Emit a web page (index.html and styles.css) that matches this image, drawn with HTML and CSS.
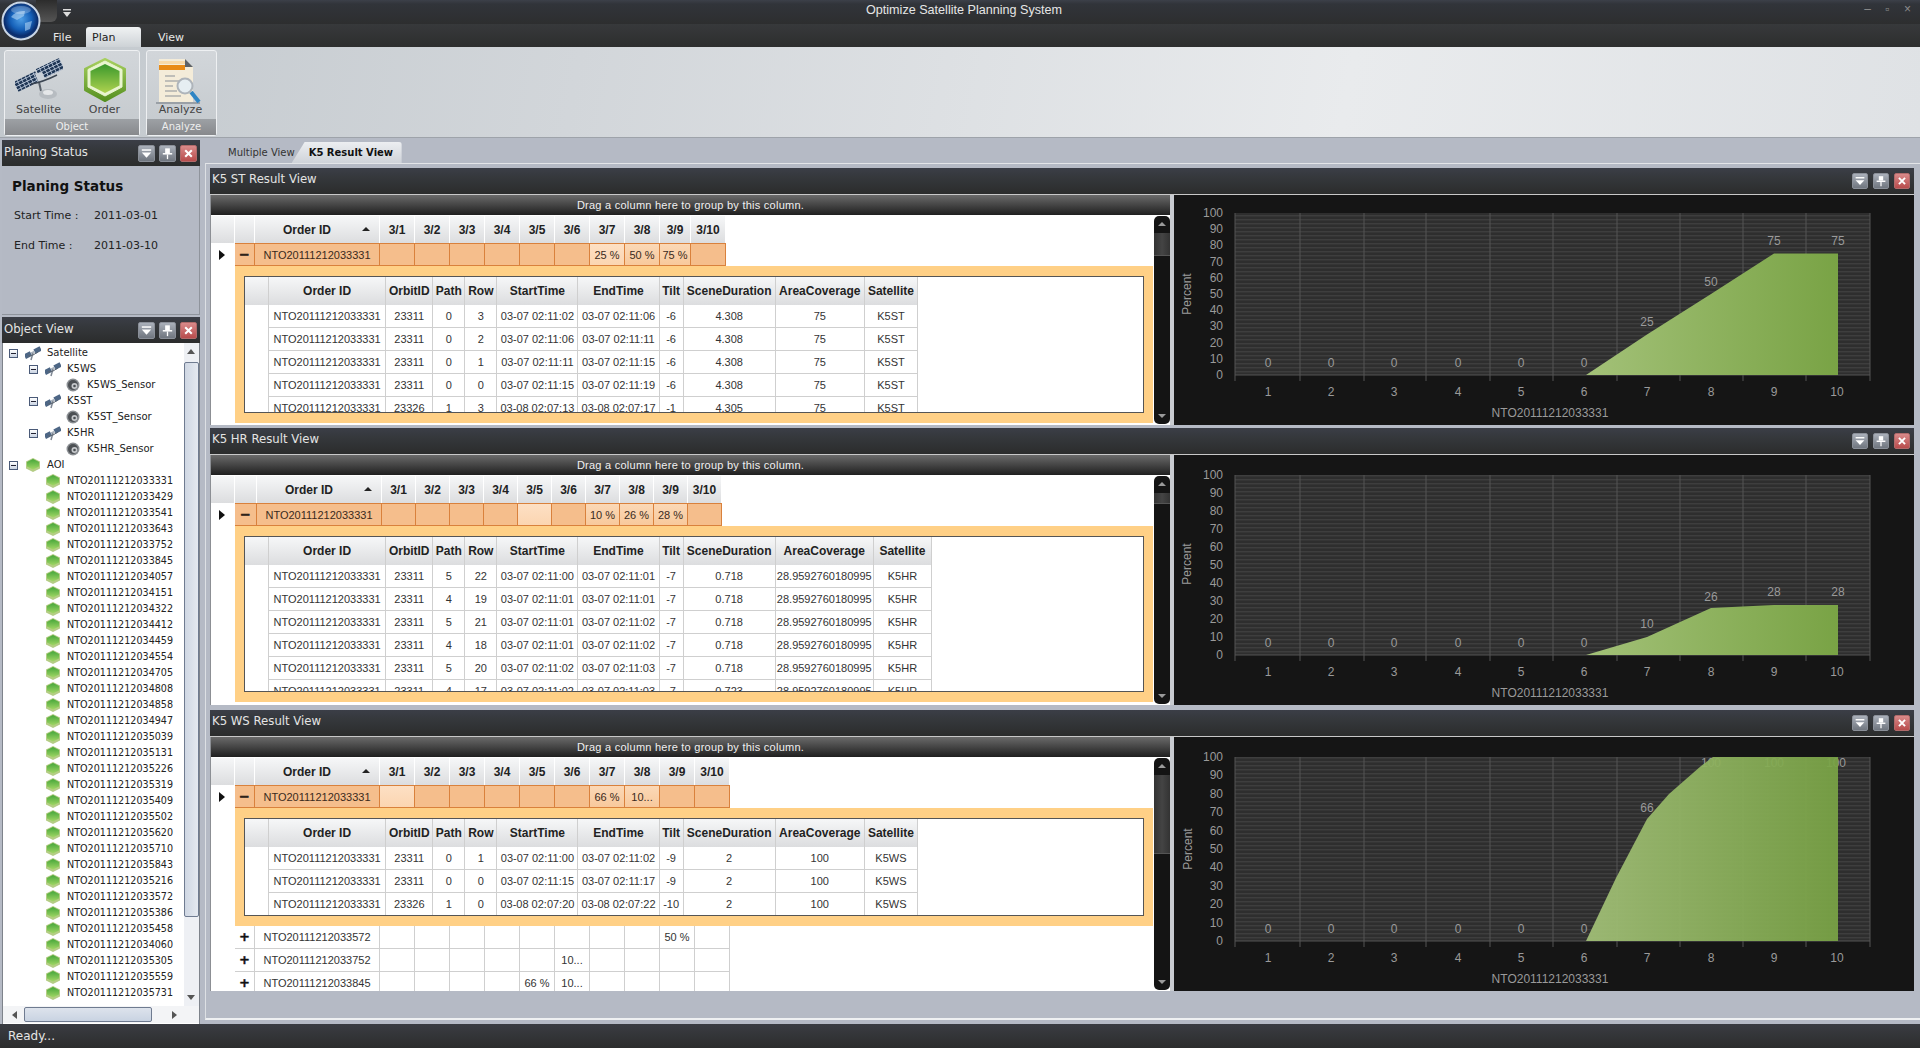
FILE: index.html
```html
<!DOCTYPE html>
<html lang="en">
<head>
<meta charset="utf-8">
<title>Optimize Satellite Planning System</title>
<link rel="stylesheet" href="styles.css">
</head>
<body>
<svg class="defs" width="0" height="0" aria-hidden="true">
  <defs>
    <radialGradient id="globeG" cx="50%" cy="45%" r="52%"><stop offset="0" stop-color="#4f9fe6"/><stop offset=".55" stop-color="#1560b8"/><stop offset=".88" stop-color="#0a2c6c"/><stop offset="1" stop-color="#1c3f78"/></radialGradient>
    <linearGradient id="hexOut" x1="0" y1="0" x2="0" y2="1"><stop offset="0" stop-color="#a8d060"/><stop offset="1" stop-color="#55901f"/></linearGradient>
    <linearGradient id="hexIn" x1="0" y1="0" x2="0" y2="1"><stop offset="0" stop-color="#3a982c"/><stop offset="1" stop-color="#aed24f"/></linearGradient>
    <linearGradient id="hexSm" x1="0" y1="0" x2="0" y2="1"><stop offset="0" stop-color="#45a63a"/><stop offset="1" stop-color="#a3d766"/></linearGradient>
    <linearGradient id="areaG" x1="0" y1="0" x2="1" y2="0"><stop offset="0" stop-color="#a3c178"/><stop offset="1" stop-color="#79a345"/></linearGradient>
    <pattern id="stripes" width="4" height="4" patternUnits="userSpaceOnUse"><rect width="4" height="4" fill="#2e2e2e"/><rect width="4" height="1.4" fill="#3e3e3e"/></pattern>
    <pattern id="cells" width="4.4" height="3.4" patternUnits="userSpaceOnUse"><rect width="4.4" height="3.4" fill="#b9c6d8"/><rect width="3.6" height="2.6" fill="#1f3655"/></pattern>
    <symbol id="hex" viewBox="0 0 46 46">
      <polygon points="23,2 43,12 43,33 23,44 3,33 3,12" fill="url(#hexOut)" stroke="url(#hexOut)" stroke-width="2" stroke-linejoin="round"/>
      <polygon points="23,4 40,12.500 40,30 23,39 6,30 6,12.500" fill="#e9f5cf" stroke="#e9f5cf" stroke-linejoin="round"/>
      <polygon points="23,7 37.500,14 37.500,28.500 23,36 8.500,28.500 8.500,14" fill="url(#hexIn)"/>
    </symbol>
    <symbol id="hexs" viewBox="0 0 16 16">
      <polygon points="8,1 15,4.500 15,11.500 8,15 1,11.500 1,4.500" fill="#b4cd84"/>
      <polygon points="8,2 14,5 14,9.500 8,12.500 2,9.500 2,5" fill="url(#hexSm)"/>
    </symbol>
    <symbol id="sat" viewBox="0 0 48 44">
      <g transform="rotate(-26 12 24)"><rect x="0" y="18" width="24" height="11" fill="url(#cells)"/></g>
      <g transform="rotate(-26 35 11)"><rect x="22" y="5" width="26" height="12" fill="url(#cells)"/></g>
      <polygon points="20,16 27,14 31,23 24,25" fill="#c9d0d8"/>
      <path d="M24 24 L26 33" stroke="#58606a" stroke-width="2"/>
      <path d="M16 26 Q28 24 42 17" stroke="#3b4552" stroke-width="1.500" fill="none"/>
      <ellipse cx="33" cy="36" rx="9" ry="5" fill="#b7bcc1"/>
      <ellipse cx="33" cy="34.500" rx="5" ry="2.500" fill="#e5e7e9"/>
    </symbol>
    <symbol id="sats" viewBox="0 0 16 16">
      <g transform="rotate(-28 8 8)"><rect x="-1" y="5" width="7" height="5" fill="#4d6685"/><rect x="10" y="5" width="7" height="5" fill="#4d6685"/><rect x="6" y="6.500" width="4" height="2" fill="#a9b2bd"/></g>
      <path d="M8 8 L6 15" stroke="#7f8894" stroke-width="1.500"/>
      <path d="M3 11 Q8 11 13 7" stroke="#5a6470" stroke-width="1" fill="none"/>
    </symbol>
    <symbol id="sensor" viewBox="0 0 14 14">
      <circle cx="7" cy="7" r="6.500" fill="#8a8e92"/>
      <circle cx="7" cy="7" r="5" fill="#4c5054"/>
      <circle cx="8.500" cy="8" r="3" fill="#c6c9cc"/>
      <circle cx="8.500" cy="8" r="1.300" fill="#4a4e52"/>
    </symbol>
    <symbol id="analyze" viewBox="0 0 54 50">
      <rect x="2" y="46" width="44" height="2" fill="#9aa0a6"/>
      <polygon points="5,3 31,3 39,11 39,46 5,46" fill="#f4ecd9"/>
      <polygon points="31,3 39,11 31,11" fill="#5d6268"/>
      <rect x="5" y="9" width="26" height="5" fill="#e88a16"/>
      <rect x="5" y="5" width="26" height="3" fill="#f7d9a9"/>
      <path d="M11 20h10M11 25h14M11 30h8M11 35h12M11 40h16" stroke="#8a9097" stroke-width="1.200"/>
      <line x1="37" y1="36" x2="45" y2="46" stroke="#2f85c4" stroke-width="4"/>
      <circle cx="31" cy="30" r="7.500" fill="#e6eef2" stroke="#aeb4ba" stroke-width="2"/>
    </symbol>
    <symbol id="bdown" viewBox="0 0 16 16">
      <rect x="3" y="3.500" width="10" height="1.600" fill="#fff"/><polygon points="3,7 13,7 8,12.500" fill="#fff"/>
    </symbol>
    <symbol id="bpin" viewBox="0 0 16 16">
      <rect x="5.500" y="2.500" width="5" height="5" fill="#fff"/><rect x="3" y="7.500" width="10" height="1.600" fill="#fff"/><rect x="7.300" y="9" width="1.400" height="5" fill="#fff"/>
    </symbol>
    <symbol id="bclose" viewBox="0 0 16 16">
      <path d="M4.500 4.500 L11.500 11.500 M11.500 4.500 L4.500 11.500" stroke="#fff" stroke-width="2.200"/>
    </symbol>
  </defs>
</svg>

<header class="titlebar">
  <span class="qat"></span>
  <svg class="globe" viewBox="0 0 40 40"><circle cx="20" cy="20" r="18.500" fill="url(#globeG)" stroke="#c9d6e6" stroke-width="2"/><path d="M10 16 Q15 9 24 10 L23 15 L16 19 Z M24 22 L31 20 L29 28 L24 30 Z" fill="#bcdcf7" opacity=".55"/><ellipse cx="20" cy="9" rx="10" ry="4" fill="#fff" opacity=".25"/></svg>
  <svg class="qat-drop" viewBox="0 0 10 10"><rect x="1" y="0" width="8" height="1.500" fill="#ddd"/><polygon points="1,3 9,3 5,8" fill="#ddd"/></svg>
  <span class="app-title">Optimize Satellite Planning System</span>
  <span class="win-ctl"><i>–</i><i>▫</i><i>×</i></span>
</header>

<nav class="menubar">
  <span class="menu">File</span>
  <span class="menu menu-on">Plan</span>
  <span class="menu">View</span>
</nav>

<section class="ribbon">
  <div class="rgroup rgroup-obj">
    <div class="rbtns">
      <div class="rbtn"><svg class="ic-sat"><use href="#sat"/></svg><span>Satellite</span></div>
      <div class="rbtn"><svg class="ic-hex"><use href="#hex"/></svg><span>Order</span></div>
    </div>
    <div class="rlabel">Object</div>
  </div>
  <div class="rgroup rgroup-an">
    <div class="rbtns">
      <div class="rbtn"><svg class="ic-an"><use href="#analyze"/></svg><span>Analyze</span></div>
    </div>
    <div class="rlabel">Analyze</div>
  </div>
</section>

<div class="workspace">
  <aside class="sidebar">
    <div class="side-head"><span>Planing Status</span><span class="btns btns-lg"><b class="wbtn"><svg><use href="#bdown"/></svg></b><b class="wbtn"><svg><use href="#bpin"/></svg></b><b class="wbtn wclose"><svg><use href="#bclose"/></svg></b></span></div>
    <div class="status-body">
      <h2>Planing Status</h2>
      <p><span>Start Time :</span><span>2011-03-01</span></p>
      <p><span>End Time :</span><span>2011-03-10</span></p>
    </div>
    <div class="side-head"><span>Object View</span><span class="btns btns-lg"><b class="wbtn"><svg><use href="#bdown"/></svg></b><b class="wbtn"><svg><use href="#bpin"/></svg></b><b class="wbtn wclose"><svg><use href="#bclose"/></svg></b></span></div>
    <div class="tree-wrap">
      <div class="tree-top">
        <ul class="tree">
          <li class="l0"><i class="exp"></i><svg class="ti"><use href="#sats"/></svg>Satellite</li>
          <li class="l1"><i class="exp"></i><svg class="ti"><use href="#sats"/></svg>K5WS</li>
          <li class="l2"><svg class="ti ts"><use href="#sensor"/></svg>K5WS_Sensor</li>
          <li class="l1"><i class="exp"></i><svg class="ti"><use href="#sats"/></svg>K5ST</li>
          <li class="l2"><svg class="ti ts"><use href="#sensor"/></svg>K5ST_Sensor</li>
          <li class="l1"><i class="exp"></i><svg class="ti"><use href="#sats"/></svg>K5HR</li>
          <li class="l2"><svg class="ti ts"><use href="#sensor"/></svg>K5HR_Sensor</li>
          <li class="l0"><i class="exp"></i><svg class="ti"><use href="#hexs"/></svg>AOI</li>
          <li class="ln"><svg class="ti"><use href="#hexs"/></svg>NTO20111212033331</li>
          <li class="ln"><svg class="ti"><use href="#hexs"/></svg>NTO20111212033429</li>
          <li class="ln"><svg class="ti"><use href="#hexs"/></svg>NTO20111212033541</li>
          <li class="ln"><svg class="ti"><use href="#hexs"/></svg>NTO20111212033643</li>
          <li class="ln"><svg class="ti"><use href="#hexs"/></svg>NTO20111212033752</li>
          <li class="ln"><svg class="ti"><use href="#hexs"/></svg>NTO20111212033845</li>
          <li class="ln"><svg class="ti"><use href="#hexs"/></svg>NTO20111212034057</li>
          <li class="ln"><svg class="ti"><use href="#hexs"/></svg>NTO20111212034151</li>
          <li class="ln"><svg class="ti"><use href="#hexs"/></svg>NTO20111212034322</li>
          <li class="ln"><svg class="ti"><use href="#hexs"/></svg>NTO20111212034412</li>
          <li class="ln"><svg class="ti"><use href="#hexs"/></svg>NTO20111212034459</li>
          <li class="ln"><svg class="ti"><use href="#hexs"/></svg>NTO20111212034554</li>
          <li class="ln"><svg class="ti"><use href="#hexs"/></svg>NTO20111212034705</li>
          <li class="ln"><svg class="ti"><use href="#hexs"/></svg>NTO20111212034808</li>
          <li class="ln"><svg class="ti"><use href="#hexs"/></svg>NTO20111212034858</li>
          <li class="ln"><svg class="ti"><use href="#hexs"/></svg>NTO20111212034947</li>
          <li class="ln"><svg class="ti"><use href="#hexs"/></svg>NTO20111212035039</li>
          <li class="ln"><svg class="ti"><use href="#hexs"/></svg>NTO20111212035131</li>
          <li class="ln"><svg class="ti"><use href="#hexs"/></svg>NTO20111212035226</li>
          <li class="ln"><svg class="ti"><use href="#hexs"/></svg>NTO20111212035319</li>
          <li class="ln"><svg class="ti"><use href="#hexs"/></svg>NTO20111212035409</li>
          <li class="ln"><svg class="ti"><use href="#hexs"/></svg>NTO20111212035502</li>
          <li class="ln"><svg class="ti"><use href="#hexs"/></svg>NTO20111212035620</li>
          <li class="ln"><svg class="ti"><use href="#hexs"/></svg>NTO20111212035710</li>
          <li class="ln"><svg class="ti"><use href="#hexs"/></svg>NTO20111212035843</li>
          <li class="ln"><svg class="ti"><use href="#hexs"/></svg>NTO20111212035216</li>
          <li class="ln"><svg class="ti"><use href="#hexs"/></svg>NTO20111212033572</li>
          <li class="ln"><svg class="ti"><use href="#hexs"/></svg>NTO20111212035386</li>
          <li class="ln"><svg class="ti"><use href="#hexs"/></svg>NTO20111212035458</li>
          <li class="ln"><svg class="ti"><use href="#hexs"/></svg>NTO20111212034060</li>
          <li class="ln"><svg class="ti"><use href="#hexs"/></svg>NTO20111212035305</li>
          <li class="ln"><svg class="ti"><use href="#hexs"/></svg>NTO20111212035559</li>
          <li class="ln"><svg class="ti"><use href="#hexs"/></svg>NTO20111212035731</li>
        </ul>
        <div class="tree-vs"><i class="arr-up"></i><span class="tree-thumb"></span><i class="arr-dn"></i></div>
      </div>
      <div class="tree-hs"><i class="arr-l"></i><span class="tree-hthumb"></span><i class="arr-r"></i></div>
    </div>
  </aside>

  <main class="main">
    <div class="doctabs"><span class="dtab">Multiple View</span><span class="dtab dtab-on">K5 Result View</span></div>
    <div class="docframe">

      <section class="panel panel-st">
        <div class="panel-head"><span>K5 ST Result View</span><span class="btns"><b class="wbtn"><svg><use href="#bdown"/></svg></b><b class="wbtn"><svg><use href="#bpin"/></svg></b><b class="wbtn wclose"><svg><use href="#bclose"/></svg></b></span></div>
        <div class="panel-body">
          <div class="grid">
            <div class="groupbar">Drag a column here to group by this column.</div>
            <div class="grid-rows">
              <div class="grid-scroll">
                <table class="master">
                  <colgroup><col class="m-ind"><col class="m-exp"><col class="m-id"><col class="m-d"><col class="m-d"><col class="m-d"><col class="m-d"><col class="m-d"><col class="m-d"><col class="m-d"><col class="m-d"><col class="m-n"><col class="m-d"><col></colgroup>
                  <tr><th></th><th></th><th class="sortable">Order ID<i class="sort"></i></th><th>3/1</th><th>3/2</th><th>3/3</th><th>3/4</th><th>3/5</th><th>3/6</th><th>3/7</th><th>3/8</th><th>3/9</th><th>3/10</th><th class="blank"></th></tr>
                  <tr class="sel"><td class="ind"><i class="tri"></i></td><td class="pm">−</td><td>NTO20111212033331</td><td></td><td></td><td></td><td></td><td></td><td></td><td class="lit">25 %</td><td class="lit2">50 %</td><td class="lit2">75 %</td><td></td><td class="blank"></td></tr>
                  <tr><td class="ind"></td><td class="detail" colspan="13">
                    <div class="dbox dbox-st">
                      <table class="inner i-st">
                        <colgroup><col class="i-ind"><col class="i-id"><col class="i-orb"><col class="i-pr"><col class="i-pr"><col class="i-t"><col class="i-t"><col class="i-tilt"><col class="i-sc"><col class="i-ar"><col class="i-sa"></colgroup>
                        <tr><th></th><th>Order ID</th><th>OrbitID</th><th>Path</th><th>Row</th><th>StartTime</th><th>EndTime</th><th>Tilt</th><th>SceneDuration</th><th>AreaCoverage</th><th>Satellite</th></tr>
                        <tr><td></td><td>NTO20111212033331</td><td>23311</td><td>0</td><td>3</td><td>03-07 02:11:02</td><td>03-07 02:11:06</td><td>-6</td><td>4.308</td><td>75</td><td>K5ST</td></tr>
                        <tr><td></td><td>NTO20111212033331</td><td>23311</td><td>0</td><td>2</td><td>03-07 02:11:06</td><td>03-07 02:11:11</td><td>-6</td><td>4.308</td><td>75</td><td>K5ST</td></tr>
                        <tr><td></td><td>NTO20111212033331</td><td>23311</td><td>0</td><td>1</td><td>03-07 02:11:11</td><td>03-07 02:11:15</td><td>-6</td><td>4.308</td><td>75</td><td>K5ST</td></tr>
                        <tr><td></td><td>NTO20111212033331</td><td>23311</td><td>0</td><td>0</td><td>03-07 02:11:15</td><td>03-07 02:11:19</td><td>-6</td><td>4.308</td><td>75</td><td>K5ST</td></tr>
                        <tr><td></td><td>NTO20111212033331</td><td>23326</td><td>1</td><td>3</td><td>03-08 02:07:13</td><td>03-08 02:07:17</td><td>-1</td><td>4.305</td><td>75</td><td>K5ST</td></tr>
                      </table>
                    </div>
                  </td></tr>
                </table>
              </div>
              <div class="vs"><i class="varr"></i><span class="vthumb vt-st"></span><span class="vfill"></span><i class="varr varr-dn"></i></div>
            </div>
          </div>
          <svg class="chart chart-st" viewBox="0 0 740 230">
            <rect x="61" y="18" width="635" height="162" fill="url(#stripes)"/>
            <path class="grid-v" d="M61 18V186M126 18V186M190 18V186M252 18V186M316 18V186M379 18V186M443 18V186M506 18V186M569 18V186M632 18V186M696 18V186M61 180H696"/>
            <g class="tx-y"><text x="49" y="22">100</text><text x="49" y="38">90</text><text x="49" y="54">80</text><text x="49" y="71">70</text><text x="49" y="87">60</text><text x="49" y="103">50</text><text x="49" y="119">40</text><text x="49" y="135">30</text><text x="49" y="152">20</text><text x="49" y="168">10</text><text x="49" y="184">0</text></g>
            <g class="tx-x"><text x="94" y="201">1</text><text x="157" y="201">2</text><text x="220" y="201">3</text><text x="284" y="201">4</text><text x="347" y="201">5</text><text x="410" y="201">6</text><text x="473" y="201">7</text><text x="537" y="201">8</text><text x="600" y="201">9</text><text x="663" y="201">10</text>
            <text x="94" y="172">0</text><text x="157" y="172">0</text><text x="220" y="172">0</text><text x="284" y="172">0</text><text x="347" y="172">0</text><text x="410" y="172">0</text><text x="473" y="131">25</text><text x="537" y="91">50</text><text x="600" y="50">75</text><text x="664" y="50">75</text>
            <text x="376" y="222">NTO20111212033331</text><text x="13" y="99" transform="rotate(-90 13 99)" dy="4">Percent</text></g>
            <polygon points="412,180 473,139.500 537,99 600,58.500 664,58.500 664,180" fill="url(#areaG)"/>
          </svg>
        </div>
      </section>

      <section class="panel panel-hr">
        <div class="panel-head"><span>K5 HR Result View</span><span class="btns"><b class="wbtn"><svg><use href="#bdown"/></svg></b><b class="wbtn"><svg><use href="#bpin"/></svg></b><b class="wbtn wclose"><svg><use href="#bclose"/></svg></b></span></div>
        <div class="panel-body">
          <div class="grid">
            <div class="groupbar">Drag a column here to group by this column.</div>
            <div class="grid-rows">
              <div class="grid-scroll">
                <table class="master">
                  <colgroup><col class="m-ind"><col class="h-exp"><col class="h-id"><col class="h-d"><col class="h-d"><col class="h-d"><col class="h-d"><col class="h-d"><col class="h-d"><col class="h-d"><col class="h-d"><col class="h-d"><col class="h-d"><col></colgroup>
                  <tr><th></th><th></th><th class="sortable">Order ID<i class="sort"></i></th><th>3/1</th><th>3/2</th><th>3/3</th><th>3/4</th><th>3/5</th><th>3/6</th><th>3/7</th><th>3/8</th><th>3/9</th><th>3/10</th><th class="blank"></th></tr>
                  <tr class="sel"><td class="ind"><i class="tri"></i></td><td class="pm">−</td><td>NTO20111212033331</td><td></td><td></td><td></td><td></td><td class="lit"></td><td></td><td class="lit2">10 %</td><td class="lit2">26 %</td><td class="lit2">28 %</td><td></td><td class="blank"></td></tr>
                  <tr><td class="ind"></td><td class="detail" colspan="13">
                    <div class="dbox dbox-hr">
                      <table class="inner i-hr">
                        <colgroup><col class="i-ind"><col class="i-id"><col class="i-orb"><col class="i-pr"><col class="i-pr"><col class="i-t"><col class="i-t"><col class="i-tilt"><col class="i-sc"><col class="i-ar2"><col class="i-sa2"></colgroup>
                        <tr><th></th><th>Order ID</th><th>OrbitID</th><th>Path</th><th>Row</th><th>StartTime</th><th>EndTime</th><th>Tilt</th><th>SceneDuration</th><th>AreaCoverage</th><th>Satellite</th></tr>
                        <tr><td></td><td>NTO20111212033331</td><td>23311</td><td>5</td><td>22</td><td>03-07 02:11:00</td><td>03-07 02:11:01</td><td>-7</td><td>0.718</td><td>28.9592760180995</td><td>K5HR</td></tr>
                        <tr><td></td><td>NTO20111212033331</td><td>23311</td><td>4</td><td>19</td><td>03-07 02:11:01</td><td>03-07 02:11:01</td><td>-7</td><td>0.718</td><td>28.9592760180995</td><td>K5HR</td></tr>
                        <tr><td></td><td>NTO20111212033331</td><td>23311</td><td>5</td><td>21</td><td>03-07 02:11:01</td><td>03-07 02:11:02</td><td>-7</td><td>0.718</td><td>28.9592760180995</td><td>K5HR</td></tr>
                        <tr><td></td><td>NTO20111212033331</td><td>23311</td><td>4</td><td>18</td><td>03-07 02:11:01</td><td>03-07 02:11:02</td><td>-7</td><td>0.718</td><td>28.9592760180995</td><td>K5HR</td></tr>
                        <tr><td></td><td>NTO20111212033331</td><td>23311</td><td>5</td><td>20</td><td>03-07 02:11:02</td><td>03-07 02:11:03</td><td>-7</td><td>0.718</td><td>28.9592760180995</td><td>K5HR</td></tr>
                        <tr><td></td><td>NTO20111212033331</td><td>23311</td><td>4</td><td>17</td><td>03-07 02:11:02</td><td>03-07 02:11:03</td><td>-7</td><td>0.723</td><td>28.9592760180995</td><td>K5HR</td></tr>
                      </table>
                    </div>
                  </td></tr>
                </table>
              </div>
              <div class="vs"><i class="varr"></i><span class="vthumb vt-hr"></span><span class="vfill"></span><i class="varr varr-dn"></i></div>
            </div>
          </div>
          <svg class="chart chart-hr" viewBox="0 0 740 250">
            <rect x="61" y="20" width="635" height="180" fill="url(#stripes)"/>
            <path class="grid-v" d="M61 20V206M126 20V206M190 20V206M252 20V206M316 20V206M379 20V206M443 20V206M506 20V206M569 20V206M632 20V206M696 20V206M61 200H696"/>
            <g class="tx-y"><text x="49" y="24">100</text><text x="49" y="42">90</text><text x="49" y="60">80</text><text x="49" y="78">70</text><text x="49" y="96">60</text><text x="49" y="114">50</text><text x="49" y="132">40</text><text x="49" y="150">30</text><text x="49" y="168">20</text><text x="49" y="186">10</text><text x="49" y="204">0</text></g>
            <g class="tx-x"><text x="94" y="221">1</text><text x="157" y="221">2</text><text x="220" y="221">3</text><text x="284" y="221">4</text><text x="347" y="221">5</text><text x="410" y="221">6</text><text x="473" y="221">7</text><text x="537" y="221">8</text><text x="600" y="221">9</text><text x="663" y="221">10</text>
            <text x="94" y="192">0</text><text x="157" y="192">0</text><text x="220" y="192">0</text><text x="284" y="192">0</text><text x="347" y="192">0</text><text x="410" y="192">0</text><text x="473" y="173">10</text><text x="537" y="146">26</text><text x="600" y="141">28</text><text x="664" y="141">28</text>
            <text x="376" y="242">NTO20111212033331</text><text x="13" y="109" transform="rotate(-90 13 109)" dy="4">Percent</text></g>
            <polygon points="412,200 473,182 537,153 600,150 664,150 664,200" fill="url(#areaG)"/>
          </svg>
        </div>
      </section>

      <section class="panel panel-ws">
        <div class="panel-head"><span>K5 WS Result View</span><span class="btns"><b class="wbtn"><svg><use href="#bdown"/></svg></b><b class="wbtn"><svg><use href="#bpin"/></svg></b><b class="wbtn wclose"><svg><use href="#bclose"/></svg></b></span></div>
        <div class="panel-body">
          <div class="grid">
            <div class="groupbar">Drag a column here to group by this column.</div>
            <div class="grid-rows">
              <div class="grid-scroll">
                <table class="master">
                  <colgroup><col class="m-ind"><col class="m-exp"><col class="m-id"><col class="m-d"><col class="m-d"><col class="m-d"><col class="m-d"><col class="m-d"><col class="m-d"><col class="m-d"><col class="m-d"><col class="m-d"><col class="m-d"><col></colgroup>
                  <tr><th></th><th></th><th class="sortable">Order ID<i class="sort"></i></th><th>3/1</th><th>3/2</th><th>3/3</th><th>3/4</th><th>3/5</th><th>3/6</th><th>3/7</th><th>3/8</th><th>3/9</th><th>3/10</th><th class="blank"></th></tr>
                  <tr class="sel"><td class="ind"><i class="tri"></i></td><td class="pm">−</td><td>NTO20111212033331</td><td class="lit"></td><td></td><td></td><td></td><td></td><td></td><td class="lit2">66 %</td><td class="lit2">10...</td><td></td><td></td><td class="blank"></td></tr>
                  <tr><td class="ind"></td><td class="detail" colspan="13">
                    <div class="dbox dbox-ws">
                      <table class="inner i-st">
                        <colgroup><col class="i-ind"><col class="i-id"><col class="i-orb"><col class="i-pr"><col class="i-pr"><col class="i-t"><col class="i-t"><col class="i-tilt"><col class="i-sc"><col class="i-ar"><col class="i-sa"></colgroup>
                        <tr><th></th><th>Order ID</th><th>OrbitID</th><th>Path</th><th>Row</th><th>StartTime</th><th>EndTime</th><th>Tilt</th><th>SceneDuration</th><th>AreaCoverage</th><th>Satellite</th></tr>
                        <tr><td></td><td>NTO20111212033331</td><td>23311</td><td>0</td><td>1</td><td>03-07 02:11:00</td><td>03-07 02:11:02</td><td>-9</td><td>2</td><td>100</td><td>K5WS</td></tr>
                        <tr><td></td><td>NTO20111212033331</td><td>23311</td><td>0</td><td>0</td><td>03-07 02:11:15</td><td>03-07 02:11:17</td><td>-9</td><td>2</td><td>100</td><td>K5WS</td></tr>
                        <tr><td></td><td>NTO20111212033331</td><td>23326</td><td>1</td><td>0</td><td>03-08 02:07:20</td><td>03-08 02:07:22</td><td>-10</td><td>2</td><td>100</td><td>K5WS</td></tr>
                      </table>
                    </div>
                  </td></tr>
                  <tr><td class="ind"></td><td class="pm">+</td><td>NTO20111212033572</td><td></td><td></td><td></td><td></td><td></td><td></td><td></td><td></td><td>50 %</td><td></td><td class="blank"></td></tr>
                  <tr><td class="ind"></td><td class="pm">+</td><td>NTO20111212033752</td><td></td><td></td><td></td><td></td><td></td><td>10...</td><td></td><td></td><td></td><td></td><td class="blank"></td></tr>
                  <tr><td class="ind"></td><td class="pm">+</td><td>NTO20111212033845</td><td></td><td></td><td></td><td></td><td>66 %</td><td>10...</td><td></td><td></td><td></td><td></td><td class="blank"></td></tr>
                </table>
              </div>
              <div class="vs"><i class="varr"></i><span class="vthumb vt-ws"></span><span class="vfill"></span><i class="varr varr-dn"></i></div>
            </div>
          </div>
          <svg class="chart chart-ws" viewBox="0 0 740 254">
            <rect x="61" y="20" width="635" height="184" fill="url(#stripes)"/>
            <path class="grid-v" d="M61 20V210M126 20V210M190 20V210M252 20V210M316 20V210M379 20V210M443 20V210M506 20V210M569 20V210M632 20V210M696 20V210M61 204H696"/>
            <g class="tx-y"><text x="49" y="24">100</text><text x="49" y="42">90</text><text x="49" y="61">80</text><text x="49" y="79">70</text><text x="49" y="98">60</text><text x="49" y="116">50</text><text x="49" y="134">40</text><text x="49" y="153">30</text><text x="49" y="171">20</text><text x="49" y="190">10</text><text x="49" y="208">0</text></g>
            <g class="tx-x"><text x="94" y="225">1</text><text x="157" y="225">2</text><text x="220" y="225">3</text><text x="284" y="225">4</text><text x="347" y="225">5</text><text x="410" y="225">6</text><text x="473" y="225">7</text><text x="537" y="225">8</text><text x="600" y="225">9</text><text x="663" y="225">10</text>
            <text x="94" y="196">0</text><text x="157" y="196">0</text><text x="220" y="196">0</text><text x="284" y="196">0</text><text x="347" y="196">0</text><text x="410" y="196">0</text><text x="473" y="75">66</text><text x="537" y="30">100</text><text x="600" y="30">100</text><text x="662" y="30">100</text>
            <text x="376" y="246">NTO20111212033331</text><text x="14" y="112" transform="rotate(-90 14 112)" dy="4">Percent</text></g>
            <polygon points="412,204 442,141 473,82 495,57 527,29 539,20 664,20 664,204" fill="url(#areaG)" opacity=".93"/>
          </svg>
        </div>
      </section>

    </div>
  </main>
</div>

<footer class="statusbar">Ready...</footer>
</body>
</html>
```

FILE: styles.css
```css
* { box-sizing: border-box; }
html, body { margin: 0; padding: 0; }
body {
  width: 1920px;
  height: 1048px;
  overflow: hidden;
  display: flex;
  flex-direction: column;
  background: #b5bac5;
  font-family: "Liberation Sans", Arial, sans-serif;
  font-size: 11px;
  color: #222;
}
.defs { position: absolute; }

/* title bar */
.titlebar {
  height: 24px;
  flex: none;
  display: flex;
  align-items: center;
  position: relative;
  background: linear-gradient(#3c4049 0, #31343a 4px, #2d2e2f 100%);
  color: #e6e6e6;
}
.globe { position: absolute; left: 1px; top: 1px; width: 40px; height: 40px; z-index: 3; }
.qat { position: absolute; left: 36px; top: 0; width: 21px; height: 22px; border-radius: 0 0 6px 6px; background: linear-gradient(#2c2c2c, #555); }
.qat-drop { position: absolute; left: 62px; top: 9px; width: 10px; height: 10px; }
.app-title { width: 100%; text-align: center; padding-left: 8px; font-size: 12.600px; padding-bottom: 5px; }
.win-ctl { position: absolute; right: 8px; top: 2px; display: flex; gap: 11px; color: #8d8d8d; font-size: 12px; }
.win-ctl i { font-style: normal; width: 9px; text-align: center; }

/* menu */
.menubar {
  height: 23px;
  flex: none;
  display: flex;
  align-items: flex-end;
  padding-left: 53px;
  background: linear-gradient(#37393b, #2d2e2e);
  font-family: "DejaVu Sans", sans-serif;
  font-size: 11px;
  color: #e8e8e8;
}
.menu { height: 20px; line-height: 21px; width: 33px; }
.menu-on {
  width: 55px;
  padding-left: 6px;
  margin-right: 17px;
  color: #222;
  background: linear-gradient(#f0f2f3, #cdd2d6);
  border-radius: 3px 3px 0 0;
}

/* ribbon */
.ribbon {
  height: 91px;
  flex: none;
  display: flex;
  gap: 6px;
  padding: 3px 0 1px 4px;
  background: linear-gradient(100deg, #c2c8cd 0, #d2d6da 30%, #e9ebed 70%, #dfe2e5 100%);
  border-bottom: 1px solid #9ea3aa;
}
.rgroup {
  display: flex;
  flex-direction: column;
  border: 1px solid #eef0f2;
  border-radius: 3px;
  background: linear-gradient(#d2d6da, #c4c9cd);
}
.rgroup-obj { width: 136px; }
.rgroup-an { width: 71px; }
.rbtns { flex: 1; display: flex; justify-content: space-around; padding: 4px 2px 0 0; }
.rbtn { display: flex; flex-direction: column; align-items: center; justify-content: flex-end; font-family: "DejaVu Sans", sans-serif; font-size: 11px; color: #444; padding-bottom: 3px; }
.ic-sat { width: 48px; height: 46px; }
.ic-hex { width: 46px; height: 46px; }
.ic-an { width: 54px; height: 50px; margin-bottom: -3px; }
.rlabel {
  height: 16px;
  line-height: 15px;
  text-align: center;
  font-family: "DejaVu Sans", sans-serif;
  font-size: 10px;
  color: #eee;
  background: linear-gradient(#9da1a5, #87898c);
}

/* workspace */
.workspace { flex: 1; display: flex; min-height: 0; background: #b5bac5; }
.sidebar { width: 200px; flex: none; display: flex; flex-direction: column; padding: 2px 0 0 2px; }
.side-head, .panel-head {
  display: flex;
  align-items: center;
  justify-content: space-between;
  flex: none;
  height: 26px;
  background: linear-gradient(#3b3e47 0, #35383c 35%, #2b2c2c 100%);
  color: #e4e4e4;
  font-family: "DejaVu Sans", sans-serif;
  font-size: 11.700px;
  padding: 0 3px 0 2px;
  white-space: nowrap;
}
.side-head > span:first-child, .panel-head > span:first-child { margin-bottom: 3px; }
.btns { display: flex; gap: 5px; }
.btns-lg { gap: 4px; }
.wbtn {
  width: 16px;
  height: 16px;
  display: block;
  border: 1px solid #8a8f98;
  border-radius: 2px;
  background: linear-gradient(#aab0ba, #70767f);
}
.wbtn svg { width: 14px; height: 14px; display: block; }
.btns-lg .wbtn { width: 17px; height: 17px; }
.btns-lg .wbtn svg { width: 15px; height: 15px; }
.wclose { border-color: #b06a6a; background: linear-gradient(#d98a8a, #b84c4c); }

.status-body { height: 149px; flex: none; margin-bottom: 2px; padding: 12px 10px; background: #b4b9c4; font-family: "DejaVu Sans", sans-serif; font-size: 11px; color: #222; border-right: 1px solid #8f949c; border-bottom: 1px solid #8f949c; }
.status-body h2 { margin: 0 0 15px; font-size: 13.500px; line-height: 16px; color: #111; font-weight: 700; }
.status-body p { margin: 0 0 16px 2px; display: flex; line-height: 14px; }
.status-body p span:first-child { width: 80px; }

.tree-wrap { flex: 1; min-height: 0; display: flex; flex-direction: column; background: #fff; border-right: 1px solid #7e838b; border-left: 1px solid #7e838b; }
.tree-top { flex: 1; min-height: 0; display: flex; }
.tree { flex: 1; margin: 0; padding: 2px 0 0; list-style: none; font-family: "DejaVu Sans", sans-serif; font-size: 10px; color: #222; overflow: hidden; }
.tree li { height: 16px; line-height: 16px; display: flex; align-items: center; white-space: nowrap; }
.l0 { padding-left: 6px; }
.l1 { padding-left: 26px; }
.l2 { padding-left: 63px; }
.tree .ln { padding-left: 42px; font-size: 9.600px; }
.exp {
  width: 9px; height: 9px; margin-right: 7px; flex: none;
  border: 1px solid #4a5a78;
  background: linear-gradient(#fff, #c9d3e2) ;
  position: relative;
}
.exp::after { content: ""; position: absolute; left: 1px; right: 1px; top: 3px; height: 1px; background: #223; }
.ti { width: 16px; height: 16px; margin-right: 6px; flex: none; }
.ts { width: 14px; height: 14px; margin-right: 7px; }
.tree-vs { width: 15px; flex: none; display: flex; flex-direction: column; align-items: stretch; background: #eef0f4; }
.tree-vs .arr-up { height: 19px; position: relative; }
.tree-thumb { height: 555px; background: linear-gradient(90deg, #cfd7e3, #e5e9f0); border: 1px solid #6f7b90; border-radius: 2px; }
.tree-vs .arr-dn { flex: 1; position: relative; }
.arr-up::after { content: ""; position: absolute; left: 3px; top: 6px; border: 4px solid transparent; border-top: 0; border-bottom: 5px solid #555; }
.arr-dn::after { content: ""; position: absolute; left: 3px; bottom: 6px; border: 4px solid transparent; border-bottom: 0; border-top: 5px solid #555; }
.tree-hs { height: 17px; flex: none; display: flex; align-items: center; padding: 0 15px 0 9px; margin-bottom: 1px; background: #f3f4f6; }
.arr-l { border: 4px solid transparent; border-left: 0; border-right: 5px solid #555; margin-right: 7px; }
.tree-hthumb { width: 128px; height: 15px; background: linear-gradient(#dde3ec, #c9d3e2); border: 1px solid #6f7b90; border-radius: 2px; margin-right: 20px; }
.arr-r { border: 4px solid transparent; border-right: 0; border-left: 5px solid #555; }

/* main */
.main { flex: 1; min-width: 0; display: flex; flex-direction: column; padding-left: 5px; }
.doctabs { height: 25px; flex: none; display: flex; align-items: flex-end; padding-left: 23px; font-family: "DejaVu Sans", sans-serif; font-size: 10px; color: #333; }
.dtab { height: 21px; line-height: 21px; margin-right: 15px; }
.dtab-on {
  font-weight: 700;
  color: #111;
  width: 110px;
  margin-left: -18px;
  padding-left: 17px;
  white-space: nowrap;
  background: linear-gradient(#eceef1, #cfd3d9);
  border-radius: 3px 3px 0 0;
  clip-path: polygon(13px 0, 100% 0, 100% 100%, 0 100%);
}
.docframe {
  flex: 1;
  min-height: 0;
  margin-bottom: 4px;
  padding: 4px 6px 0 4px;
  background: #b5bac5;
  border-top: 1px solid #e3e5e8;
  border-left: 1px solid #dde0e4;
  border-bottom: 2px solid #eef0f2;
  display: flex;
  flex-direction: column;
}
.panel { flex: none; display: flex; flex-direction: column; }
.panel-st { height: 257px; margin-bottom: 3px; }
.panel-hr { height: 277px; margin-bottom: 5px; }
.panel-ws { height: 281px; }
.panel-head { border-bottom: 1px solid #c8c8c8; height: 27px; padding-bottom: 1px; padding-right: 4px; }
.panel-body { flex: 1; min-height: 0; display: flex; background: #c8cbd0; }
.grid { width: 960px; flex: none; display: flex; flex-direction: column; background: #fff; border-left: 1px solid #8c8f94; }
.chart { width: 740px; flex: none; margin-left: 4px; background: #151515; display: block; }
.chart-st { height: 230px; }
.chart-hr { height: 250px; }
.chart-ws { height: 254px; }
.chart text { font-family: "Liberation Sans", Arial, sans-serif; font-size: 12px; fill: #9a9a9a; }
.tx-y text { text-anchor: end; }
.tx-x text { text-anchor: middle; }
.grid-v { stroke: #555; stroke-width: 1; fill: none; }

.groupbar {
  height: 21px;
  flex: none;
  line-height: 21px;
  text-align: center;
  color: #f0f0f0;
  font-size: 11px;
  letter-spacing: .25px;
  background: linear-gradient(#6a6a6a, #1f1f1f);
  border-bottom: 1px solid #fff;
}
.grid-rows { flex: 1; min-height: 0; display: flex; }
.grid-scroll { flex: 1; min-width: 0; overflow: hidden; }
.vs { width: 16px; flex: none; margin: 0 0 1px 1px; display: flex; flex-direction: column; background: #141414; border-radius: 5px; }
.varr { height: 17px; flex: none; position: relative; }
.varr::after { content: ""; position: absolute; left: 4px; top: 6px; border: 4px solid transparent; border-top: 0; border-bottom: 4px solid #9a9a9a; }
.varr-dn::after { top: 7px; border-bottom: 0; border-top: 4px solid #9a9a9a; }
.vthumb { flex: none; background: linear-gradient(90deg, #333, #444 50%, #333); border-bottom: 1px solid #555; }
.vt-st { height: 23px; }
.vt-hr { height: 11px; }
.vt-ws { height: 79px; }
.vfill { flex: 1; }

/* tables */
table { border-collapse: separate; border-spacing: 0; table-layout: fixed; }
.master { width: 943px; }
.m-ind { width: 24px; }
.m-exp { width: 20px; }
.m-id { width: 125px; }
.m-d { width: 35px; }
.m-n { width: 31px; }
.h-exp { width: 22px; }
.h-id { width: 125px; }
.h-d { width: 34px; }
th {
  height: 27px;
  padding: 0;
  font-size: 12px;
  font-weight: 700;
  color: #222;
  text-align: center;
  white-space: nowrap;
  overflow: hidden;
  background: linear-gradient(#f6f7f8, #dcdddf);
  border-right: 1px solid #fff;
  border-left: 0;
}
td {
  height: 23px;
  padding: 0;
  font-size: 11px;
  color: #333;
  text-align: center;
  white-space: nowrap;
  overflow: hidden;
  background: #fff;
  border-right: 1px solid #cfcfcf;
  border-bottom: 1px solid #cfcfcf;
}
.master .blank, .master th.blank { background: #fff; border: 0; }
.sortable { position: relative; padding-right: 20px; }
.sort { position: absolute; right: 9px; top: 11px; border: 4px solid transparent; border-top: 0; border-bottom: 4px solid #222; }
.master .ind { border: 0; background: #fff; }
.tri { display: block; width: 0; margin-left: 8px; border: 5px solid transparent; border-right: 0; border-left: 6px solid #111; }
.pm { font-family: "DejaVu Sans", sans-serif; font-weight: 700; font-size: 13px; color: #111; line-height: 20px; -webkit-text-stroke: .4px #111; }
.sel td { background: #f5be8c; border-right: 1px solid #d9813c; border-top: 1px solid #d9813c; border-bottom: 1px solid #d9813c; height: 23px; color: #3a2a1c; }
.sel td.ind, .sel td.blank { background: #fff; border: 0; }
.sel td.lit { background: linear-gradient(#fde0c4, #fbd5b1); }
.sel td.lit2 { background: linear-gradient(#fbd8b6, #f8c99c); }
.detail { padding: 0; background: #ffd086; border: 0; height: auto; overflow: visible; vertical-align: top; }
.dbox { margin: 10px 10px 10px 9px; background: #fff; border: 1px solid #555; overflow: hidden; }
.dbox-st { height: 137px; }
.dbox-hr { height: 156px; }
.dbox-ws { height: 98px; }
.inner { text-align: center; }
.i-st { width: 673px; }
.i-hr { width: 687px; }
.i-ind { width: 24px; }
.i-id { width: 117px; }
.i-orb { width: 47px; }
.i-pr { width: 32px; }
.i-t { width: 81px; }
.i-tilt { width: 24px; }
.i-sc { width: 92px; }
.i-ar { width: 89px; }
.i-sa { width: 53px; }
.i-ar2 { width: 98px; }
.i-sa2 { width: 58px; }
.inner th { height: 28px; border-right: 1px solid #cfcfcf; }
.inner tr:not(:first-child) td:first-child { border-bottom: 0; }

.statusbar {
  height: 24px;
  flex: none;
  padding-left: 8px;
  line-height: 24px;
  color: #e6e6e6;
  font-family: "DejaVu Sans", sans-serif;
  font-size: 12px;
  background: linear-gradient(#3a3c42, #2c2d2d);
}
```
